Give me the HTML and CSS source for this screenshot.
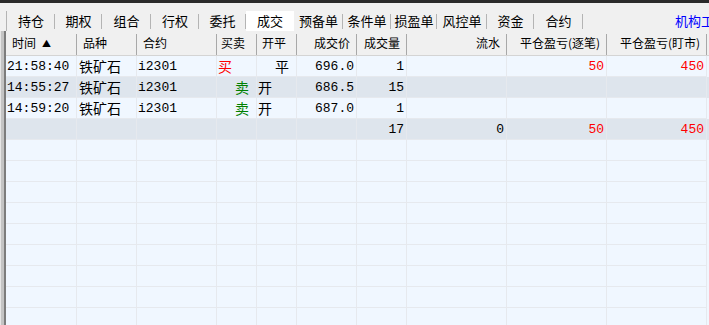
FILE: index.html
```html
<!DOCTYPE html>
<html><head><meta charset="UTF-8">
  <title>成交</title>
  <link rel="stylesheet" href="styles.css">
</head>
<body>
  <div class="topbar"></div>
  <div class="tabs">
    <span class="tab first w48">持仓</span>
    <span class="tab w47">期权</span>
    <span class="tab w49">组合</span>
    <span class="tab w48">行权</span>
    <span class="tab w47">委托</span>
    <span class="tab w48 on">成交</span>
    <span class="tab w49">预备单</span>
    <span class="tab w48">条件单</span>
    <span class="tab w46">损盈单</span>
    <span class="tab w50">风控单</span>
    <span class="tab w47">资金</span>
    <span class="tab w49">合约</span>
    <span class="org">机构工</span>
  </div>
  <div class="panel">
    <div class="edge"></div>
    <div class="grid">
      <div class="head">
        <span>时间<i class="sort">▲</i></span>
        <span>品种</span>
        <span>合约</span>
        <span class="h-bs">买卖</span>
        <span class="h-oc">开平</span>
        <span class="num">成交价</span>
        <span class="num">成交量</span>
        <span class="num">流水</span>
        <span class="num">平仓盈亏(逐笔)</span>
        <span class="num">平仓盈亏(盯市)</span>
      </div>
      <div class="row">
        <span>21:58:40</span><span class="cn">铁矿石</span><span>i2301</span>
        <span class="cn buy">买</span><span class="cn close">平</span>
        <span class="num">696.0</span><span class="num">1</span><span class="num"></span>
        <span class="num red">50</span><span class="num red">450</span>
      </div>
      <div class="row alt">
        <span>14:55:27</span><span class="cn">铁矿石</span><span>i2301</span>
        <span class="cn sell">卖</span><span class="cn open">开</span>
        <span class="num">686.5</span><span class="num">15</span><span class="num"></span>
        <span class="num"></span><span class="num"></span>
      </div>
      <div class="row">
        <span>14:59:20</span><span class="cn">铁矿石</span><span>i2301</span>
        <span class="cn sell">卖</span><span class="cn open">开</span>
        <span class="num">687.0</span><span class="num">1</span><span class="num"></span>
        <span class="num"></span><span class="num"></span>
      </div>
      <div class="row alt">
        <span></span><span></span><span></span><span></span><span></span>
        <span></span><span class="num">17</span><span class="num">0</span>
        <span class="num red">50</span><span class="num red">450</span>
      </div>
      <div class="row"><span></span><span></span><span></span><span></span><span></span><span></span><span></span><span></span><span></span><span></span></div>
      <div class="row"><span></span><span></span><span></span><span></span><span></span><span></span><span></span><span></span><span></span><span></span></div>
      <div class="row"><span></span><span></span><span></span><span></span><span></span><span></span><span></span><span></span><span></span><span></span></div>
      <div class="row"><span></span><span></span><span></span><span></span><span></span><span></span><span></span><span></span><span></span><span></span></div>
      <div class="row"><span></span><span></span><span></span><span></span><span></span><span></span><span></span><span></span><span></span><span></span></div>
      <div class="row"><span></span><span></span><span></span><span></span><span></span><span></span><span></span><span></span><span></span><span></span></div>
      <div class="row"><span></span><span></span><span></span><span></span><span></span><span></span><span></span><span></span><span></span><span></span></div>
      <div class="row"><span></span><span></span><span></span><span></span><span></span><span></span><span></span><span></span><span></span><span></span></div>
      <div class="row"><span></span><span></span><span></span><span></span><span></span><span></span><span></span><span></span><span></span><span></span></div>
    </div>
  </div>
</body></html>
```

FILE: styles.css
```css
html, body {
    margin: 0;
    height: 325px;
    overflow: hidden;
}

body {
    background: #f0f0f0;
    color: #000;
    font-family: "Noto Sans CJK SC", sans-serif;
    width: 709px;
}

.topbar {
    height: 3px;
    background: #2b2b2b;
}

.tabs {
    display: flex;
    height: 20px;
    margin-top: 8px;
    padding-left: 6px;
    font-size: 13px;
    line-height: 20px;
    white-space: nowrap;
    overflow: hidden;
}

.tab {
    text-align: center;
    flex: none;
    background: linear-gradient(#b4b4b4, #b4b4b4) right center / 1px 15px no-repeat;
}

.tab.first {
    border-left: 1px solid #b4b4b4;
}

.tab.on {
    background: #fff;
}

.w46 { width: 46px; }
.w47 { width: 47px; }
.w48 { width: 48px; }
.w49 { width: 49px; }
.w50 { width: 50px; }

.org {
    margin-left: 92px;
    color: #0000ff;
}

.panel {
    display: flex;
}

.edge {
    flex: none;
    width: 6px;
    height: 300px;
    box-sizing: border-box;
    border-left: 1px solid #e6e6e6;
    border-right: 2px solid #7c7c7c;
    background: #c4c4c4;
}

.grid {
    width: 703px;
}

.head, .row {
    display: grid;
    grid-template-columns: 71px 60px 80px 40px 40px 60px 50px 100px 100px 100px;
}

.head {
    height: 25px;
    font-size: 12px;
    line-height: 24px;
    border-bottom: 1px solid #d4d4d4;
    box-sizing: border-box;
}

.head span {
    padding: 0 6px;
    white-space: nowrap;
    overflow: hidden;
    background: linear-gradient(#a8a8a8, #a8a8a8) right bottom / 1px 21px no-repeat;
}

.head .h-bs { padding-left: 4px; }
.head .h-oc { padding-left: 5px; }
.head .num { text-align: right; padding-right: 7px; }

.sort {
    font-style: normal;
    font-size: 9px;
    margin-left: 6px;
    vertical-align: 1px;
}

.row {
    height: 21px;
    background: #f0f7ff;
    font-family: "Liberation Mono", "Noto Sans CJK SC", monospace;
    font-size: 13px;
    line-height: 21px;
}

.row.alt {
    background: #dee5ed;
}

.row span {
    border-right: 1px solid #e6e9ee;
    border-bottom: 1px solid #e6e9ee;
    padding-left: 1px;
    white-space: nowrap;
    overflow: hidden;
}

.row .cn {
    font-family: "Noto Sans CJK SC", sans-serif;
    font-size: 14px;
    padding-left: 2px;
}

.row .num {
    text-align: right;
    padding: 0 2px 0 0;
}

.row .buy { padding-left: 1px; color: #ff0000; }
.row .sell { padding-left: 18px; color: #008000; }
.row .close { padding-left: 18px; }
.row .open { padding-left: 1px; }

.red {
    color: #ff0000;
}
```
